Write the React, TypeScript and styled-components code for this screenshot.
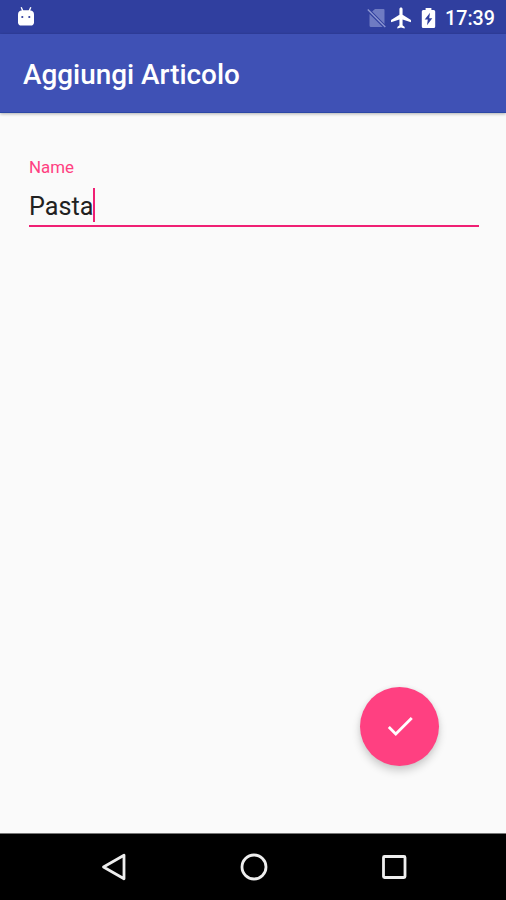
import React from "react";
import styled, { createGlobalStyle } from "styled-components";

const GlobalStyle = createGlobalStyle`
  * { box-sizing: border-box; }
  body { margin: 0; background: #fafafa; font-family: Roboto, sans-serif; }
`;

const Screen = styled.div`
  display: flex;
  flex-direction: column;
  width: 506px;
  height: 900px;
  overflow: hidden;
  background: #fafafa;
`;

const StatusBar = styled.header`
  display: flex;
  align-items: center;
  justify-content: space-between;
  flex: none;
  height: 34px;
  padding: 0 11px 0 16px;
  background: #303f9f;
  color: #fff;
`;

const StatusIcons = styled.div`
  display: flex;
  align-items: center;
  height: 34px;
  padding-top: 2px;
`;

const StatusIcon = styled.svg<{ $gap?: number }>`
  display: block;
  flex: none;
  margin-right: ${(p) => p.$gap ?? 0}px;
`;

const Clock = styled.time`
  width: 50px;
  font-size: 19.7px;
  font-weight: 500;
  line-height: 34px;
  padding-top: 1px;
  white-space: nowrap;
`;

const AppBar = styled.div`
  display: flex;
  align-items: center;
  flex: none;
  height: 79px;
  padding: 4px 23px 0;
  background: #3f51b5;
  border-bottom: 1px solid #2b47a5;
  box-shadow: 0 1px 3px rgba(0, 0, 0, 0.3);
`;

const Title = styled.h1`
  margin: 0;
  color: #fff;
  font-size: 27.9px;
  font-weight: 500;
  line-height: 36px;
  white-space: nowrap;
`;

const Content = styled.main`
  display: flex;
  flex-direction: column;
  justify-content: space-between;
  flex: 1;
  padding: 43px 27px 67.5px 29px;
`;

const Field = styled.div`
  display: flex;
  flex-direction: column;
`;

const Label = styled.span`
  color: #ff4081;
  font-size: 16.9px;
  line-height: 22px;
`;

const InputRow = styled.div`
  display: flex;
  align-items: flex-start;
  height: 49px;
  padding-top: 10px;
  border-bottom: 2px solid #f01f74;
`;

const Value = styled.span`
  color: #212121;
  font-size: 25.2px;
  line-height: 38px;
`;

const Caret = styled.span`
  width: 2px;
  height: 34px;
  background: #f01f74;
`;

const ConfirmButton = styled.button`
  display: flex;
  align-items: center;
  justify-content: center;
  align-self: flex-end;
  width: 79px;
  height: 79px;
  margin-right: 40px;
  padding: 0;
  border: 0;
  border-radius: 50%;
  background: #ff4081;
  box-shadow: 0 5px 9px rgba(0, 0, 0, 0.18), 0 0 5px rgba(0, 0, 0, 0.06);
`;

const NavBar = styled.nav`
  display: grid;
  grid-template-columns: repeat(3, 140px);
  justify-content: center;
  align-items: center;
  flex: none;
  height: 67px;
  padding-left: 1px;
  background: #000;
  border-top: 1px solid #777;
`;

const NavButton = styled.button`
  display: flex;
  align-items: center;
  justify-content: center;
  padding: 0;
  border: 0;
  background: none;
`;

function BugdroidIcon() {
  return (
    <StatusIcon width="20" height="22" viewBox="0 0 20 22">
      <path d="M5.2 1.3 6.8 5M14.8 1.3 13.2 5" stroke="#fff" strokeWidth="1.4" />
      <path
        d="M2 8.5C2 5.5 4 4.2 7 4.2h6c3 0 5 1.3 5 4.3v7.7c0 2.2-1.3 3.4-3.4 3.4H5.4C3.3 19.600 2 18.400 2 16.200Z"
        fill="#fff"
      />
      <circle cx="6.300" cy="11" r="1.100" fill="#303f9f" />
      <circle cx="13.300" cy="11" r="1.100" fill="#303f9f" />
    </StatusIcon>
  );
}

function NoSimIcon() {
  return (
    <StatusIcon width="20" height="22" viewBox="0 0 20 22" $gap={3}>
      <path d="M8 2h8.500q1 0 1 1v14L5.200 4.600ZM2.500 7.100 15.700 20H4q-1.500 0-1.500-1.500Z" fill="#6f7bc2" />
      <path d="M.8 2.500 18.300 20" stroke="#8f99d3" strokeWidth="1.300" />
    </StatusIcon>
  );
}

function AirplaneIcon() {
  return (
    <StatusIcon width="22" height="22" viewBox="1.500 1.500 20 21" $gap={9}>
      <path
        d="M21 16v-2l-8-5V3.500c0-.83-.67-1.500-1.500-1.500S10 2.670 10 3.500V9l-8 5v2l8-2.500V19l-2 1.500V22l3.500-1 3.500 1v-1.500L13 19v-5.500l8 2.500z"
        fill="#fff"
      />
    </StatusIcon>
  );
}

function BatteryIcon() {
  return (
    <StatusIcon width="15" height="22" viewBox="0 0 15 22" $gap={9}>
      <path
        d="M4.600 1h5.800v2h2.300q1.500 0 1.500 1.500v15q0 1.500-1.500 1.500H2.300Q.8 21 .8 19.500v-15Q.8 3 2.300 3h2.300Z"
        fill="#fff"
      />
      <path d="M9 5.700 3.700 12.600h3.100L6 18.300l5.300-7H8.200Z" fill="#303f9f" />
    </StatusIcon>
  );
}

export default function App() {
  return (
    <Screen>
      <GlobalStyle />
      <StatusBar>
        <BugdroidIcon />
        <StatusIcons>
          <NoSimIcon />
          <AirplaneIcon />
          <BatteryIcon />
          <Clock>17:39</Clock>
        </StatusIcons>
      </StatusBar>
      <AppBar>
        <Title>Aggiungi Articolo</Title>
      </AppBar>
      <Content>
        <Field>
          <Label>Name</Label>
          <InputRow>
            <Value>Pasta</Value>
            <Caret />
          </InputRow>
        </Field>
        <ConfirmButton aria-label="Conferma">
          <svg width="34" height="34" viewBox="0 0 24 24">
            <path d="M9 16.170 4.830 12l-1.420 1.410L9 19 21 7l-1.410-1.410z" fill="#fff" />
          </svg>
        </ConfirmButton>
      </Content>
      <NavBar>
        <NavButton aria-label="Indietro">
          <svg width="30" height="30" viewBox="0 0 30 30">
            <path d="M25 3.200v23.600L4.500 15Z" fill="none" stroke="#eee" strokeWidth="2.800" strokeLinejoin="round" />
          </svg>
        </NavButton>
        <NavButton aria-label="Home">
          <svg width="30" height="30" viewBox="0 0 30 30">
            <circle cx="15" cy="15" r="12" fill="none" stroke="#eee" strokeWidth="2.800" />
          </svg>
        </NavButton>
        <NavButton aria-label="Recenti">
          <svg width="30" height="30" viewBox="0 0 30 30">
            <rect x="4.500" y="4.500" width="21.500" height="21" rx="1" fill="none" stroke="#eee" strokeWidth="2.800" />
          </svg>
        </NavButton>
      </NavBar>
    </Screen>
  );
}
